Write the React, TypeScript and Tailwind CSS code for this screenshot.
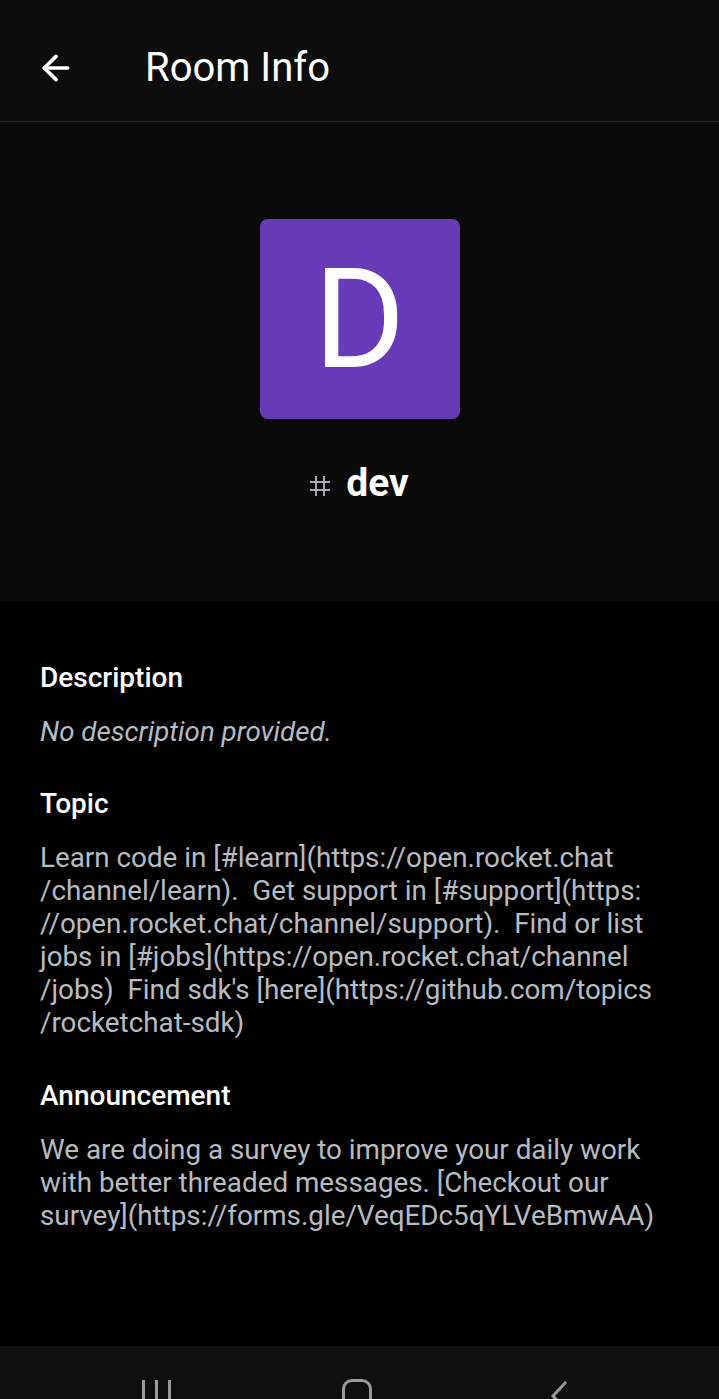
import { ArrowLeft } from "lucide-react"

const topicLines = [
    "Learn code in [#learn](https://open.rocket.chat",
    "/channel/learn).  Get support in [#support](https:",
    "//open.rocket.chat/channel/support).  Find or list",
    "jobs in [#jobs](https://open.rocket.chat/channel",
    "/jobs)  Find sdk's [here](https://github.com/topics",
    "/rocketchat-sdk)",
]

const announcementLines = [
    "We are doing a survey to improve your daily work",
    "with better threaded messages. [Checkout our",
    "survey](https://forms.gle/VeqEDc5qYLVeBmwAA)",
]

function Lines({ lines }: { lines: string[] }) {
    return (
        <div className="mt-[20px] text-[27.8px] leading-[33px] text-[#b8bbc2] whitespace-pre">
            {lines.map((l, i) => (
                <div key={i}>{l}</div>
            ))}
        </div>
    )
}

function Heading({ children, className = "" }: { children: string; className?: string }) {
    return <h2 className={`text-[28px] leading-[34px] font-medium text-white ${className}`}>{children}</h2>
}

export default function App() {
    return (
        <div className="flex h-[1399px] w-[719px] flex-col overflow-hidden bg-black font-['Roboto',sans-serif]">
            <header className="flex h-[122px] shrink-0 items-center border-b border-[#2a2a2a] bg-[#0d0d0d] pt-[14px]">
                <ArrowLeft className="ml-[36px] h-[40px] w-[40px] text-white" strokeWidth={2.2} />
                <h1 className="ml-[69px] text-[40px] text-white">Room Info</h1>
            </header>

            <section className="flex h-[479px] shrink-0 flex-col items-center bg-[#0a0a0a] pt-[97px]">
                <div className="flex h-[200px] w-[200px] items-center justify-center rounded-[8px] bg-[#673ab7]">
                    <span className="text-[140px] leading-none text-white">D</span>
                </div>
                <div className="mt-[44px] flex items-center gap-[16px]">
                    <svg width="20" height="20" viewBox="0 0 20 20" className="mt-[6px]">
                        <g stroke="#a6aab1" strokeWidth="2" fill="none">
                            <path d="M6 0v20M14 0v20M0 6h20M0 14h20" />
                        </g>
                    </svg>
                    <span className="text-[39px] leading-[40px] font-bold text-white">dev</span>
                </div>
            </section>

            <main className="flex-1 px-[40px] pt-[60px]">
                <Heading>Description</Heading>
                <p className="mt-[20px] text-[27.7px] leading-[33px] italic text-[#b8bbc2]">No description provided.</p>

                <Heading className="mt-[39px]">Topic</Heading>
                <Lines lines={topicLines} />

                <Heading className="mt-[40px]">Announcement</Heading>
                <Lines lines={announcementLines} />
            </main>

            <nav className="relative h-[53px] shrink-0 bg-[#0f0f0f]">
                <div className="absolute left-[142px] top-[34px] flex gap-[10px]">
                    <div className="h-[30px] w-[3px] bg-[#9a9a9a]" />
                    <div className="h-[30px] w-[3px] bg-[#9a9a9a]" />
                    <div className="h-[30px] w-[3px] bg-[#9a9a9a]" />
                </div>
                <div className="absolute left-[342px] top-[33px] h-[36px] w-[30px] rounded-[10px] border-[3px] border-[#9a9a9a]" />
                <svg className="absolute left-[548px] top-[34px]" width="22" height="30" viewBox="0 0 22 30">
                    <path d="M18 2L5 16l13 14" stroke="#9a9a9a" strokeWidth="3" fill="none" />
                </svg>
            </nav>
        </div>
    )
}
